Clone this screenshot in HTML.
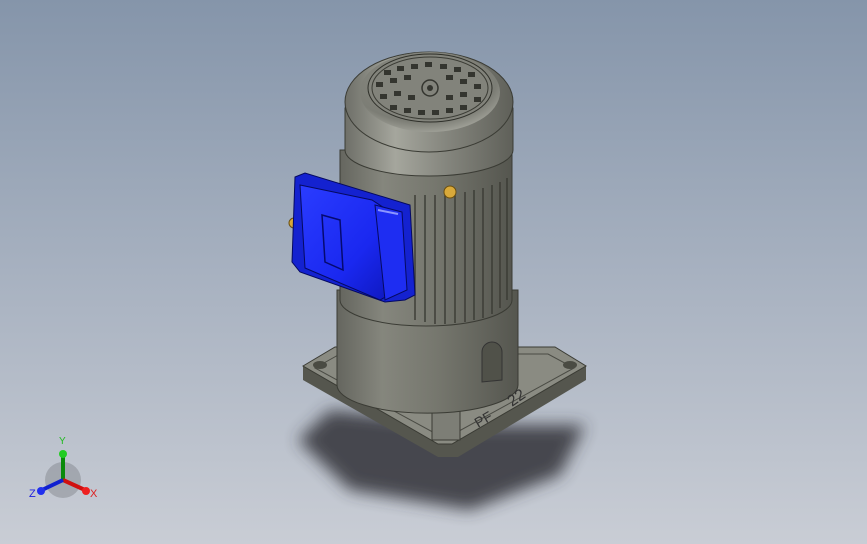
<!DOCTYPE html>
<html><head><meta charset="utf-8"><style>
html,body{margin:0;padding:0}
body{width:867px;height:544px;overflow:hidden;background:linear-gradient(180deg,#8595aa 0%,#a7b1c0 50%,#c9cdd5 100%);}
svg{position:absolute;left:0;top:0}
</style></head><body>
<svg width="867" height="544" viewBox="0 0 867 544" xmlns="http://www.w3.org/2000/svg" font-family="Liberation Sans, sans-serif">
<defs>
<filter id="bl" x="-20%" y="-20%" width="140%" height="140%"><feGaussianBlur stdDeviation="8"/></filter>
<linearGradient id="cyl" x1="0" x2="1">
<stop offset="0" stop-color="#65665f"/><stop offset="0.25" stop-color="#85867d"/><stop offset="0.55" stop-color="#76776e"/><stop offset="1" stop-color="#55564f"/></linearGradient>
<linearGradient id="cap" x1="0" x2="1">
<stop offset="0" stop-color="#6e6f68"/><stop offset="0.3" stop-color="#a5a69d"/><stop offset="0.6" stop-color="#85867e"/><stop offset="1" stop-color="#5f6059"/></linearGradient>
<linearGradient id="blue" x1="0" x2="1" y1="0" y2="1">
<stop offset="0" stop-color="#2a3cff"/><stop offset="0.6" stop-color="#1a28f0"/><stop offset="1" stop-color="#0d16b8"/></linearGradient>
<radialGradient id="dome" cx="0.45" cy="0.35" r="0.7">
<stop offset="0" stop-color="#8e8f87"/><stop offset="0.75" stop-color="#7c7d75"/><stop offset="1" stop-color="#a9aaa1"/></radialGradient>
</defs>
<!-- shadow -->
<path d="M298,440 L330,410 L470,425 L585,425 L560,475 L470,510 L350,490 Z" fill="#303237" opacity="0.85" filter="url(#bl)"/>
<!-- base plate -->
<path d="M303,380 L303,366 L335,347 L555,347 L586,366 L586,380 L458,457 L438,457 Z" fill="#55564e"/>
<path d="M303,366 L335,347 L555,347 L586,366 L452,444 L438,444 Z" fill="#8a8b82" stroke="#3a3b34" stroke-width="1"/>
<path d="M315,368 L340,354 L548,354 L574,368 L450,436 L440,436 Z" fill="none" stroke="#4a4b44" stroke-width="1"/>
<ellipse cx="320" cy="365" rx="7" ry="4" fill="#4a4b43"/>
<ellipse cx="570" cy="365" rx="7" ry="4" fill="#4a4b43"/>
<ellipse cx="444" cy="432" rx="7" ry="4" fill="#4a4b43"/>
<path d="M432,440 L432,410 L460,410 L460,440 Z" fill="#7d7e76" stroke="#3a3b34"/>
<!-- lower cylinder -->
<path d="M337,290 L518,290 L518,385 A90,28 0 0 1 337,385 Z" fill="url(#cyl)" stroke="#3a3b34" stroke-width="1"/>
<path d="M482,382 L482,352 A10,10 0 0 1 502,352 L502,380 Z" fill="#505149" stroke="#333" stroke-width="1"/>
<text x="478" y="428" font-size="14" fill="#333" transform="rotate(-30 478 428)">PF</text>
<text x="512" y="407" font-size="16" fill="#333" transform="rotate(-35 512 407)">22</text>
<!-- finned body -->
<path d="M340,150 L512,150 L512,300 A86,26 0 0 1 340,300 Z" fill="url(#cyl)" stroke="#3a3b34" stroke-width="1"/>
<g stroke="#3a3b34" stroke-width="1.4">
<line x1="415" y1="195" x2="415" y2="320"/><line x1="425" y1="195" x2="425" y2="322"/><line x1="435" y1="195" x2="435" y2="324"/><line x1="445" y1="195" x2="445" y2="324"/><line x1="455" y1="195" x2="455" y2="323"/><line x1="465" y1="192" x2="465" y2="322"/><line x1="474" y1="190" x2="474" y2="320"/><line x1="483" y1="188" x2="483" y2="318"/><line x1="492" y1="185" x2="492" y2="314"/><line x1="500" y1="182" x2="500" y2="308"/><line x1="507" y1="178" x2="507" y2="300"/>
</g>
<!-- fan cover (dome) -->
<path d="M345,108 L513,108 L513,150 A84,26 0 0 1 345,150 Z" fill="url(#cap)" stroke="#3a3b34" stroke-width="1"/>
<ellipse cx="429" cy="102" rx="84" ry="50" fill="url(#cap)" stroke="#3a3b34"/>
<ellipse cx="430" cy="92" rx="70" ry="40" fill="url(#dome)"/>
<ellipse cx="430" cy="88" rx="62" ry="34" fill="#82837b" stroke="#2f302a"/>
<ellipse cx="430" cy="88" rx="58" ry="31" fill="none" stroke="#3a3b34"/>
<g fill="#34352f">
<rect x="384" y="70" width="7" height="5"/><rect x="397" y="66" width="7" height="5"/><rect x="411" y="64" width="7" height="5"/><rect x="425" y="62" width="7" height="5"/><rect x="440" y="64" width="7" height="5"/><rect x="454" y="67" width="7" height="5"/><rect x="468" y="72" width="7" height="5"/>
<rect x="376" y="82" width="7" height="5"/><rect x="390" y="78" width="7" height="5"/><rect x="404" y="75" width="7" height="5"/><rect x="446" y="75" width="7" height="5"/><rect x="460" y="79" width="7" height="5"/><rect x="474" y="84" width="7" height="5"/>
<rect x="380" y="94" width="7" height="5"/><rect x="394" y="91" width="7" height="5"/><rect x="408" y="95" width="7" height="5"/><rect x="446" y="95" width="7" height="5"/><rect x="460" y="92" width="7" height="5"/><rect x="474" y="97" width="7" height="5"/>
<rect x="390" y="105" width="7" height="5"/><rect x="404" y="108" width="7" height="5"/><rect x="418" y="110" width="7" height="5"/><rect x="432" y="110" width="7" height="5"/><rect x="446" y="108" width="7" height="5"/><rect x="460" y="105" width="7" height="5"/>
</g>
<circle cx="430" cy="88" r="8" fill="none" stroke="#34352f" stroke-width="1.5"/>
<circle cx="430" cy="88" r="3" fill="#34352f"/>
<!-- screws -->
<circle cx="450" cy="192" r="6" fill="#d9a93a" stroke="#6b4f10"/>
<circle cx="294" cy="223" r="5" fill="#d9a93a" stroke="#6b4f10"/>
<!-- blue terminal box -->
<path d="M295,177 L305,173 L410,205 L415,295 L405,300 L385,302 L300,272 L292,262 Z" fill="#1422d0" stroke="#050a60"/>
<path d="M300,185 L372,200 L395,215 L398,290 L380,300 L305,268 Z" fill="url(#blue)" stroke="#050a60"/>
<path d="M375,205 L402,212 L407,290 L385,300 Z" fill="#1e2df2" stroke="#050a60"/>
<path d="M378,210 L398,214" stroke="#8c96ff" stroke-width="2"/>
<path d="M322,215 L340,220 L343,270 L325,262 Z" fill="none" stroke="#050a70" stroke-width="1.5"/>
<!-- axes triad -->
<circle cx="63" cy="480" r="18" fill="#6b6e74" opacity="0.35"/>
<line x1="63" y1="480" x2="63" y2="455" stroke="#0a8a0a" stroke-width="4"/>
<circle cx="63" cy="454" r="4" fill="#22cc22"/>
<line x1="63" y1="480" x2="85" y2="490" stroke="#d01010" stroke-width="4"/>
<circle cx="86" cy="491" r="4" fill="#ee2020"/>
<line x1="63" y1="480" x2="42" y2="490" stroke="#1020d0" stroke-width="4"/>
<circle cx="41" cy="491" r="4" fill="#2030ee"/>
<text x="59" y="444" font-size="10" fill="#22bb22">Y</text>
<text x="90" y="497" font-size="11" fill="#dd2020">X</text>
<text x="29" y="497" font-size="11" fill="#2020dd">Z</text>
</svg>
</body></html>
